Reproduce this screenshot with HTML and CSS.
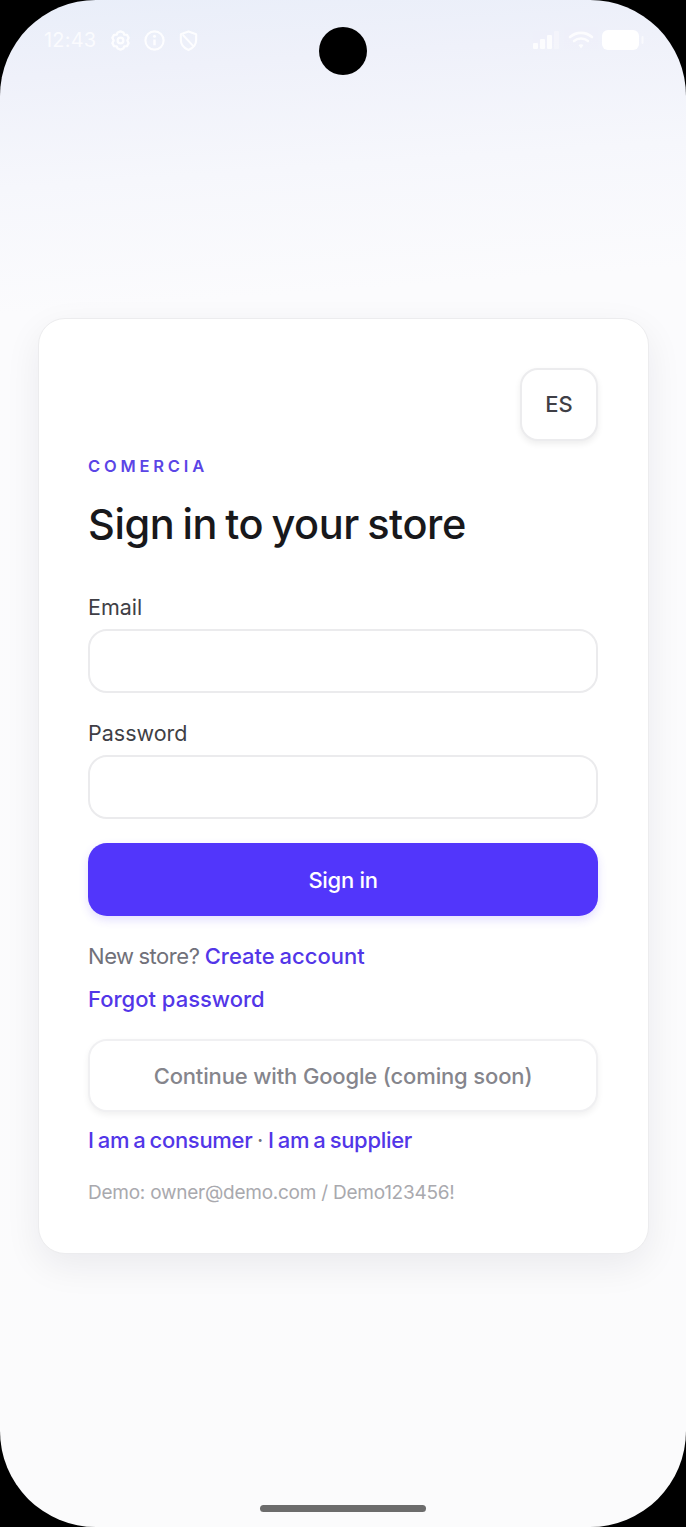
FILE: index.html
```html
<!DOCTYPE html>
<html lang="en">
<head>
<meta charset="utf-8">
<title>Sign in</title>
<link rel="stylesheet" href="styles.css">
</head>
<body>
<div class="screen">
  <div class="status">
    <div class="status-left">
      <span class="time">12:43</span>
      <svg class="ico" viewBox="0 0 24 24" width="23" height="23"><path d="M12 2.500l3 1.200 1 2.200 2.800.3 1.700 3-1.400 2.800 1.400 2.800-1.700 3-2.800.3-1 2.200-3 1.200-3-1.200-1-2.200-2.800-.3-1.700-3 1.400-2.800-1.400-2.800 1.700-3 2.800-.3 1-2.200z" fill="none" stroke="#fff" stroke-width="2.400" stroke-linejoin="round"/><circle cx="12" cy="12" r="3" fill="none" stroke="#fff" stroke-width="2.400"/></svg>
      <svg class="ico" viewBox="0 0 24 24" width="23" height="23"><circle cx="12" cy="12" r="9.500" fill="none" stroke="#fff" stroke-width="2.200"/><path d="M12 11v6" stroke="#fff" stroke-width="2.600"/><circle cx="12" cy="7.500" r="1.600" fill="#fff"/></svg>
      <svg class="ico" viewBox="0 0 24 24" width="23" height="23"><path d="M12 2.500l8 3v6c0 5-3.400 8.500-8 10.500-4.600-2-8-5.500-8-10.500v-6z" fill="none" stroke="#fff" stroke-width="2.200" stroke-linejoin="round"/><path d="M6 6l12 13" stroke="#fff" stroke-width="2"/></svg>
    </div>
    <div class="status-right">
      <svg class="sig" viewBox="0 0 28 20" width="28" height="20"><rect x="1" y="13" width="5" height="6" rx="1" fill="#fff"/><rect x="8" y="9" width="5" height="10" rx="1" fill="#fff"/><rect x="15" y="5" width="5" height="14" rx="1" fill="#fff"/><rect x="22" y="1" width="5" height="18" rx="1" fill="#fff" opacity=".4"/></svg>
      <svg class="wifi" viewBox="0 0 26 20" width="26" height="20"><path d="M2 7c6.500-5.500 15.500-5.500 22 0M6 11c4-3.300 10-3.300 14 0" fill="none" stroke="#fff" stroke-width="2.600" stroke-linecap="round"/><path d="M10.500 15c1.500-1 3.500-1 5 0L13 18.500z" fill="#fff"/></svg>
      <svg viewBox="0 0 42 22" width="42" height="22"><rect x="0" y="1" width="37" height="20" rx="6" fill="#fff"/><rect x="39.500" y="7" width="2" height="8" rx="1" fill="#fff" opacity=".6"/></svg>
    </div>
  </div>
  <div class="camera"></div>
  <main class="stage">
    <section class="card">
      <div class="lang-row"><button class="lang" type="button">ES</button></div>
      <div class="brand">COMERCIA</div>
      <h1 class="title">Sign in to your store</h1>
      <form class="form">
        <label class="field"><span class="field-label">Email</span><input class="input" type="email"></label>
        <label class="field"><span class="field-label">Password</span><input class="input" type="password"></label>
        <button class="primary" type="button">Sign in</button>
      </form>
      <p class="line line-new"><span class="muted">New store?</span> <a class="link" href="#">Create account</a></p>
      <p class="line line-forgot"><a class="link" href="#">Forgot password</a></p>
      <button class="google" type="button">Continue with Google (coming soon)</button>
      <p class="line line-roles"><a class="link" href="#">I am a consumer</a> <span class="dot">·</span> <a class="link" href="#">I am a supplier</a></p>
      <p class="demo">Demo: owner@demo.com / Demo123456!</p>
    </section>
  </main>
  <div class="home-bar"></div>
</div>
</body>
</html>
```
FILE: styles.css
```css
* { box-sizing: border-box; }
html, body { margin: 0; padding: 0; background: #000; }
body { width: 686px; height: 1527px; overflow: hidden; font-family: "Inter", "Liberation Sans", sans-serif; }

.screen {
  position: relative;
  width: 686px;
  height: 1527px;
  border-radius: 96px;
  overflow: hidden;
  display: flex;
  flex-direction: column;
  background: linear-gradient(176deg, #e9eef9 0%, #eff1fa 5%, #f6f7fc 12%, #fbfbfd 20%, #fbfbfc 100%);
}

.status {
  height: 0;
  display: flex;
  justify-content: space-between;
  padding: 0 42px 0 44px;
  position: relative;
  z-index: 1;
}
.status-left, .status-right {
  height: 80px;
  display: flex;
  align-items: center;
}
.status-left { gap: 11px; }
.status-right { gap: 8px; }
.time { color: #fff; font-size: 20px; letter-spacing: .2px; opacity: .75; margin-right: 2px; }
.ico { opacity: .85; }
.sig, .wifi { opacity: .8; }

.camera {
  position: absolute;
  left: 319px;
  top: 27px;
  width: 48px;
  height: 48px;
  border-radius: 50%;
  background: #000;
}

.stage {
  flex: 1;
  padding: 44px 0 0 38px;
  display: flex;
  align-items: center;
}

.card {
  width: 611px;
  height: 936px;
  padding: 49px 50px 0 49px;
  background: #fff;
  border: 1px solid #ececee;
  border-radius: 27px;
  box-shadow: 0 12px 36px rgba(20, 20, 40, .07);
}

.lang-row { display: flex; justify-content: flex-end; }
.lang {
  width: 78px;
  height: 73px;
  background: #fff;
  border: 2px solid #ececee;
  border-radius: 18px;
  box-shadow: 0 3px 6px rgba(0, 0, 0, .07);
  color: #3f3f46;
  font: 500 22px "Inter", "Liberation Sans", sans-serif;
}

.brand {
  margin-top: 15px;
  height: 20px;
  line-height: 20px;
  color: #5b45e6;
  font-size: 16.500px;
  font-weight: 600;
  letter-spacing: 3.800px;
}

.title {
  margin: 20px 0 0;
  height: 56px;
  line-height: 56px;
  font-size: 41.500px;
  font-weight: 500;
  letter-spacing: -.4px;
  word-spacing: -2.500px;
  color: #18181b;
  white-space: nowrap;
}

.form { margin-top: 40px; display: flex; flex-direction: column; }
.field { display: flex; flex-direction: column; margin-bottom: 25px; }
.field-label {
  height: 30px;
  line-height: 30px;
  margin-bottom: 7px;
  font-size: 21.500px;
  color: #3f3f46;
}
.input {
  height: 64px;
  border: 2px solid #ebebed;
  border-radius: 19px;
  background: #fff;
  outline: none;
}

.primary {
  height: 73px;
  margin-top: -1px;
  padding-top: 2px;
  border: 0;
  border-radius: 19px;
  background: #5236fb;
  color: #fff;
  font: 500 22px "Inter", "Liberation Sans", sans-serif;
  letter-spacing: -.3px;
  box-shadow: 0 4px 10px rgba(82, 54, 251, .16);
}

.line {
  margin: 0;
  height: 30px;
  line-height: 30px;
  font-size: 22px;
  color: #71717a;
  white-space: nowrap;
}
.muted { letter-spacing: -.45px; }
.line-new { margin-top: 25px; word-spacing: -1px; }
.line-forgot { margin-top: 13px; }
.line-roles { margin-top: 13px; word-spacing: -1.500px; }
.link { color: #5236e8; font-weight: 500; text-decoration: none; letter-spacing: 0; }
.line-roles .link { letter-spacing: -.3px; }
.dot { color: #71717a; }

.google {
  display: block;
  width: 100%;
  height: 73px;
  margin-top: 25px;
  padding-top: 3px;
  background: #fff;
  border: 2px solid #f0f0f2;
  border-radius: 19px;
  box-shadow: 0 3px 6px rgba(0, 0, 0, .06);
  color: #85858c;
  font: 500 22px "Inter", "Liberation Sans", sans-serif;
  letter-spacing: -.15px;
}

.demo {
  margin: 23px 0 0;
  height: 30px;
  line-height: 30px;
  font-size: 19px;
  color: #a9a9ae;
  letter-spacing: -.25px;
  white-space: nowrap;
}

.home-bar {
  position: absolute;
  left: 260px;
  top: 1505px;
  width: 166px;
  height: 7px;
  border-radius: 4px;
  background: #6c6c6c;
}
```
